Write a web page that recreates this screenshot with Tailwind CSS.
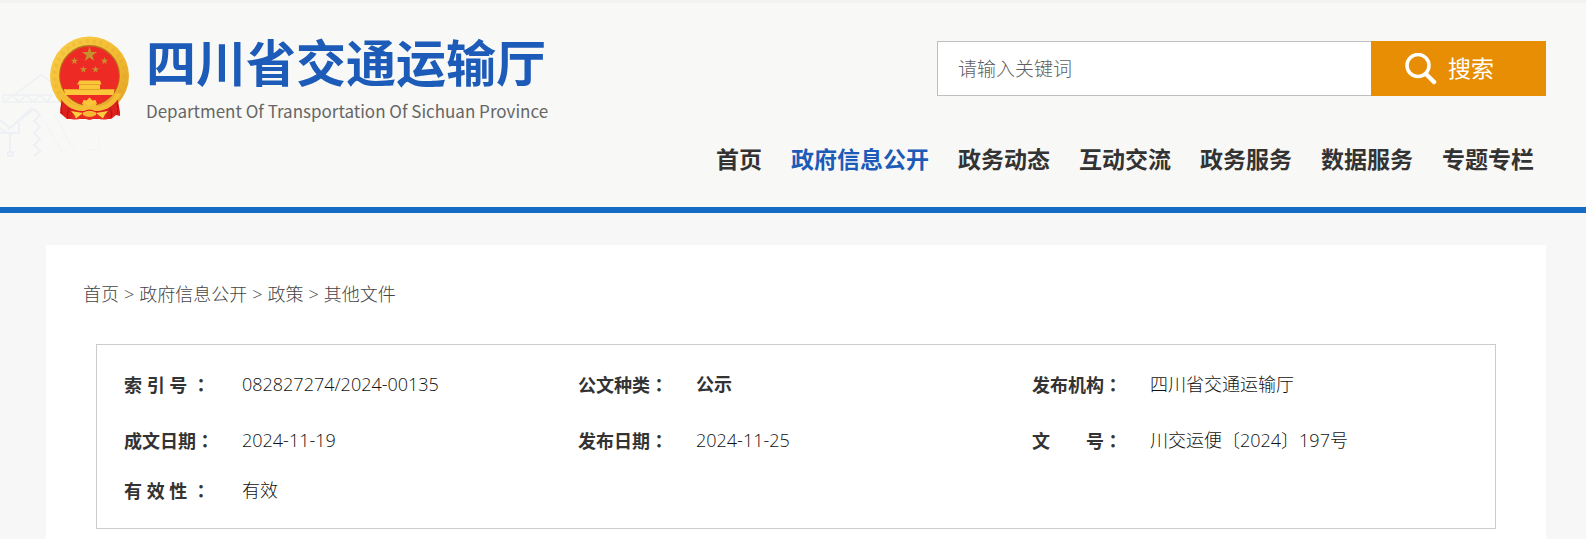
<!DOCTYPE html>
<html lang="zh-CN">
<head>
<meta charset="utf-8">
<meta name="viewport" content="width=device-width, initial-scale=1">
<title>四川省交通运输厅</title>
<script src="https://cdn.jsdelivr.net/npm/@tailwindcss/browser@4"></script>
</head>
<body class="min-h-screen bg-[#f7f7f7] text-[#333] font-['Open_Sans','Noto_Sans_CJK_SC',sans-serif]">
<header class="relative border-t-3 border-[#f2f2f2] bg-[#f8f8f6]">
  <!-- faint crane drawing at the left edge -->
  <svg class="absolute left-0 top-[67px] h-[90px] w-[110px]" viewBox="0 0 110 90" fill="none" stroke="#edf0f4" stroke-width="1.5" aria-hidden="true">
    <path d="M3 25H52M3 32H62M3 25V32M5 32l7-7 7 7 7-7 7 7 7-7 7 7 5-7M14 25 41 5 52 12"/>
    <path d="M0 50 10 58 34 39M0 63H19V52M0 58 12 66M32 38 8 60M34 39 40 45 34 51 40 57 34 63 40 69 34 75 40 81 34 86M10 66V82M8 82h5v4H8z" stroke-width="2"/>
    <path d="M44 50 62 82M54 44 76 84M99 62V80H88" stroke-width="1" stroke="#f3f4f5"/>
  </svg>
  <div class="relative flex items-start justify-between pl-[50px] pr-10 pt-8">
    <a href="#" class="flex items-start gap-4">
      <svg class="mt-px h-[84px] w-20 shrink-0" viewBox="0 0 80 84" role="img" aria-label="国徽">
        <defs>
          <linearGradient id="gold" x1="0" y1="0" x2="1" y2="1"><stop offset="0" stop-color="#f9cf4a"/><stop offset=".5" stop-color="#f3bd33"/><stop offset="1" stop-color="#e0a024"/></linearGradient>
          <path id="star" d="M0-1 .2245-.309 .951-.309 .363.118 .588.809 0 .382-.588.809-.363.118-.951-.309-.2245-.309z"/>
        </defs>
        <circle cx="39.500" cy="40" r="39.500" fill="url(#gold)"/>
        <circle cx="39.500" cy="40" r="35" fill="none" stroke="#dc9a25" stroke-width="4" stroke-dasharray="3 4" opacity=".22"/>
        <circle cx="39.500" cy="39.500" r="30.500" fill="#b8721c"/>
        <circle cx="39.500" cy="40" r="29.500" fill="#ed2a24"/>
        <g fill="#c8902c">
          <use href="#star" transform="translate(39.500 18.500) scale(8)"/>
          <use href="#star" transform="translate(24.500 25) scale(4)"/>
          <use href="#star" transform="translate(54.500 25) scale(4)"/>
          <use href="#star" transform="translate(33.500 33.500) scale(3.800)"/>
          <use href="#star" transform="translate(45.500 33.500) scale(3.800)"/>
        </g>
        <path d="M29.500 44.500H50l1.500 4H50V53H64.500l-1 6H15l-1-6H29V48.500H27z" fill="#fbc63a"/>
        <path d="M29 48.500H50M15 53.500H64" stroke="#e09a22" stroke-width=".8"/>
        <path d="M12 59 25 70Q39 76 54 70L67 59 70 76 70 80 66 79 61 83H17L10 77z" fill="#df211d"/>
        <path d="M21 83 24 76H55L58 83Q52 84.500 47 82L39.500 84 32 82Q27 84.500 21 83z" fill="#e92a23"/>
        <path d="M8 58C13 69 24 76 34 75Q39.500 72 45 75C55 76 66 69 71 58L66 57C61 66 53 71 47 70Q45 65 39.500 65 34 65 32 70C26 71 18 66 13 57z" fill="#f4bd35"/>
        <path d="M32 68 33.500 64 36.500 64.500 39.500 61.500 42.500 64.500 45.500 64 47 68 43.500 67.500 39.500 71 35.500 67.500z" fill="#fbc63a"/>
        <path d="M33 76.500Q39.500 73 46 76.500L46 79Q39.500 83 33 79z" fill="#f7b733"/>
        <path d="M21 75 33 77 26 82.500Q25 79 21 75zM58 75 46 77 53 82.500Q54 79 58 75z" fill="#fbd040"/>
        <path d="M12 67Q10 74 12 78M67 67Q69 74 67 78M19 72Q16 78 18 82M60 72Q63 78 61 82" stroke="#ad1513" stroke-width="1" fill="none"/>
      </svg>
      <span class="flex flex-col">
        <span class="text-[50px] leading-[56px] font-bold text-[#1d5bb8] whitespace-nowrap">四川省交通运输厅</span>
        <span class="mt-2 text-[17px] leading-6 text-[#666] whitespace-nowrap font-['Noto_Sans_CJK_SC',sans-serif]">Department Of Transportation Of Sichuan Province</span>
      </span>
    </a>
    <form class="mt-[6px] flex h-[55px] w-[609px]" onsubmit="return false">
      <input type="text" aria-label="关键词" placeholder="请输入关键词" class="min-w-0 flex-1 border border-r-0 border-[#bfbfbf] bg-white px-5 pt-[2px] text-[19px] font-light outline-none placeholder:text-[#606060]">
      <button type="submit" class="flex w-[175px] items-center gap-[11px] bg-[#e88e04] pl-[34px] text-[23px] text-white">
        <svg class="size-8 shrink-0" viewBox="0 0 32 32" fill="none" stroke="#fff" aria-hidden="true"><circle cx="13" cy="12.500" r="11" stroke-width="3.500"/><path d="M21 21 29 29" stroke-width="4.500" stroke-linecap="round"/></svg>搜索</button>
    </form>
  </div>
  <nav class="relative flex justify-end gap-[29px] whitespace-nowrap pr-[52px] pt-5 pb-8 text-[23px] leading-8 font-bold">
    <a href="#">首页</a>
    <a href="#" class="text-[#1d5bb8]">政府信息公开</a>
    <a href="#">政务动态</a>
    <a href="#">互动交流</a>
    <a href="#">政务服务</a>
    <a href="#">数据服务</a>
    <a href="#">专题专栏</a>
  </nav>
  <div class="h-[6px] bg-[#166bc4]"></div>
</header>
<main class="ml-[46px] mr-10 mt-8 min-h-[294px] bg-white px-[37px] pt-[35px]">
  <nav aria-label="面包屑" class="flex gap-[5px] text-[18px] leading-7 font-light text-[#444]">
    <a href="#">首页</a><span>&gt;</span><a href="#">政府信息公开</a><span>&gt;</span><a href="#">政策</a><span>&gt;</span><a href="#">其他文件</a>
  </nav>
  <section class="ml-[13px] mr-[13px] mt-9 border border-[#ccc] pl-[27px] pr-[9px] pt-[11px] pb-4">
    <table class="w-full table-fixed text-left text-[18px] leading-6">
      <colgroup><col class="w-[118px]"><col><col class="w-[118px]"><col><col class="w-[118px]"><col></colgroup>
      <tbody class="font-light">
        <tr class="h-14"><th class="font-bold">索 引 号 <span lang="zh-TW" class="font-['Noto_Sans_CJK_TC']">：</span></th><td class="text-[#111]">082827274/2024-00135</td><th class="font-bold">公文种类<span lang="zh-TW" class="font-['Noto_Sans_CJK_TC']">：</span></th><td class="font-bold">公示</td><th class="font-bold">发布机构<span lang="zh-TW" class="font-['Noto_Sans_CJK_TC']">：</span></th><td class="text-[#111]">四川省交通运输厅</td></tr>
        <tr class="h-14"><th class="font-bold">成文日期<span lang="zh-TW" class="font-['Noto_Sans_CJK_TC']">：</span></th><td class="text-[#111]">2024-11-19</td><th class="font-bold">发布日期<span lang="zh-TW" class="font-['Noto_Sans_CJK_TC']">：</span></th><td class="text-[#111]">2024-11-25</td><th class="font-bold">文　　号<span lang="zh-TW" class="font-['Noto_Sans_CJK_TC']">：</span></th><td class="text-[#111]">川交运便〔2024〕197号</td></tr>
        <tr class="h-11"><th class="font-bold">有 效 性 <span lang="zh-TW" class="font-['Noto_Sans_CJK_TC']">：</span></th><td class="text-[#111]">有效</td><td></td><td></td><td></td><td></td></tr>
      </tbody>
    </table>
  </section>
</main>
</body>
</html>
